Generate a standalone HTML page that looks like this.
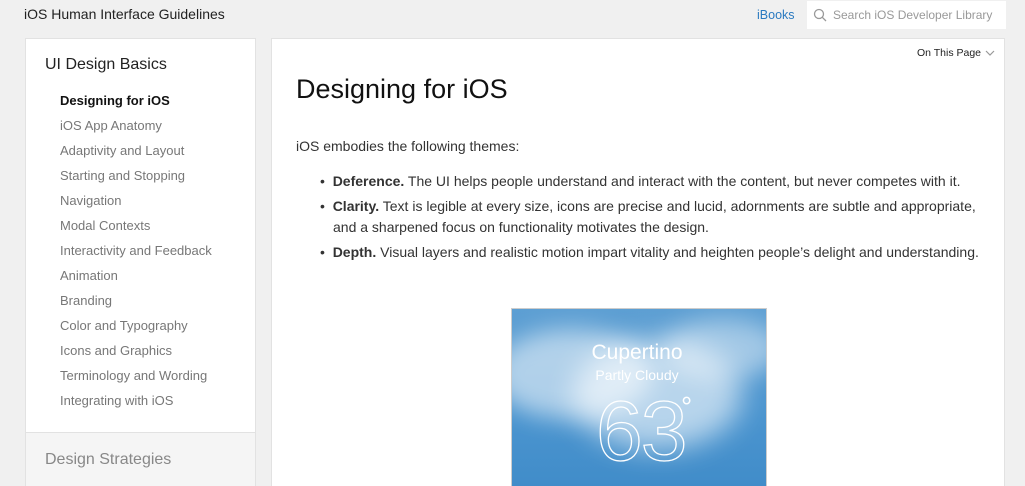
<!DOCTYPE html>
<html style="overflow:hidden;height:486px"><head><style>
*{margin:0;padding:0;box-sizing:border-box}
body{width:1025px;height:486px;overflow:hidden;background:#f0f0f0;font-family:"Liberation Sans",sans-serif;position:relative;color:#333}
.a{position:absolute;white-space:nowrap}
#side{position:absolute;left:25px;top:38px;width:231px;height:448px;background:#fff;border:1px solid #e2e2e2;border-bottom:none;overflow:hidden}
#side .nav{position:absolute;left:34px;font-size:13px;color:#777}
#main{position:absolute;left:271px;top:38px;width:734px;height:448px;background:#fff;border:1px solid #e2e2e2;border-bottom:none;overflow:hidden}
.p{font-size:14px;color:#333;line-height:21px}
</style></head><body>
<div class="a" style="left:24px;top:6px;font-size:14px;color:#222">iOS Human Interface Guidelines</div>
<div class="a" style="left:757px;top:8px;font-size:12.5px;color:#2a7ac0">iBooks</div>
<div class="a" style="left:807px;top:1px;width:199px;height:28px;background:#fff"></div>
<svg class="a" style="left:813px;top:8px" width="14" height="14"><circle cx="6" cy="6" r="4.5" fill="none" stroke="#999" stroke-width="1.3"/><line x1="9.3" y1="9.3" x2="13" y2="13" stroke="#999" stroke-width="1.3"/></svg>
<div class="a" style="left:833px;top:8px;font-size:12px;color:#999">Search iOS Developer Library</div>
<div id="side">
<div class="a" style="left:19px;top:17px;font-size:16px;color:#222">UI Design Basics</div>
<div class="nav" style="top:54px;color:#111;font-weight:bold">Designing for iOS</div>
<div class="nav" style="top:79px">iOS App Anatomy</div>
<div class="nav" style="top:104px">Adaptivity and Layout</div>
<div class="nav" style="top:129px">Starting and Stopping</div>
<div class="nav" style="top:154px">Navigation</div>
<div class="nav" style="top:179px">Modal Contexts</div>
<div class="nav" style="top:204px">Interactivity and Feedback</div>
<div class="nav" style="top:229px">Animation</div>
<div class="nav" style="top:254px">Branding</div>
<div class="nav" style="top:279px">Color and Typography</div>
<div class="nav" style="top:304px">Icons and Graphics</div>
<div class="nav" style="top:329px">Terminology and Wording</div>
<div class="nav" style="top:354px">Integrating with iOS</div>
<div class="a" style="left:0;top:393px;width:229px;height:70px;background:#f5f5f5;border-top:1px solid #e2e2e2"></div>
<div class="a" style="left:19px;top:412px;font-size:16px;color:#888">Design Strategies</div>
</div>
<div id="main">
<div class="a" style="left:645px;top:8px;font-size:10.5px;color:#222">On This Page</div>
<svg class="a" style="left:713px;top:11px" width="10" height="7"><polyline points="1,1 5,5 9,1" fill="none" stroke="#999" stroke-width="1.2"/></svg>
<div class="a" style="left:24px;top:35px;font-size:27px;color:#111">Designing for iOS</div>
<div class="a p" style="left:24px;top:97px">iOS embodies the following themes:</div>
<div class="a p" style="left:48px;top:132px">•&nbsp; <b>Deference.</b> The UI helps people understand and interact with the content, but never competes with it.</div>
<div class="a p" style="left:48px;top:157px">•&nbsp; <b>Clarity.</b> Text is legible at every size, icons are precise and lucid, adornments are subtle and appropriate,</div>
<div class="a p" style="left:61px;top:178px">and a sharpened focus on functionality motivates the design.</div>
<div class="a p" style="left:48px;top:203px">•&nbsp; <b>Depth.</b> Visual layers and realistic motion impart vitality and heighten people’s delight and understanding.</div>
<div class="a" style="left:239px;top:269px;width:256px;height:190px;border:1px solid #ccc;overflow:hidden;background:linear-gradient(180deg,#5d9fd3 0%,#4a94cf 60%,#3f8bc8 100%)">
<div class="a" style="left:-20px;top:20px;width:160px;height:90px;border-radius:50%;background:rgba(255,255,255,.55);filter:blur(12px)"></div>
<div class="a" style="left:60px;top:30px;width:170px;height:110px;border-radius:50%;background:rgba(255,255,255,.6);filter:blur(14px)"></div>
<div class="a" style="left:150px;top:10px;width:120px;height:60px;border-radius:50%;background:rgba(255,255,255,.45);filter:blur(12px)"></div>
<div class="a" style="left:-3px;top:32px;width:256px;text-align:center;font-size:21px;color:#fff">Cupertino</div>
<div class="a" style="left:-3px;top:58px;width:256px;text-align:center;font-size:14px;color:#fff">Partly Cloudy</div>
<div class="a" style="left:84px;top:74px;font-size:84px;font-weight:100;color:transparent;-webkit-text-stroke:1.3px #fff;letter-spacing:-2px">63</div>
<div class="a" style="left:169px;top:82px;font-size:28px;color:#fff">°</div>
</div>
</div>
</body></html>
